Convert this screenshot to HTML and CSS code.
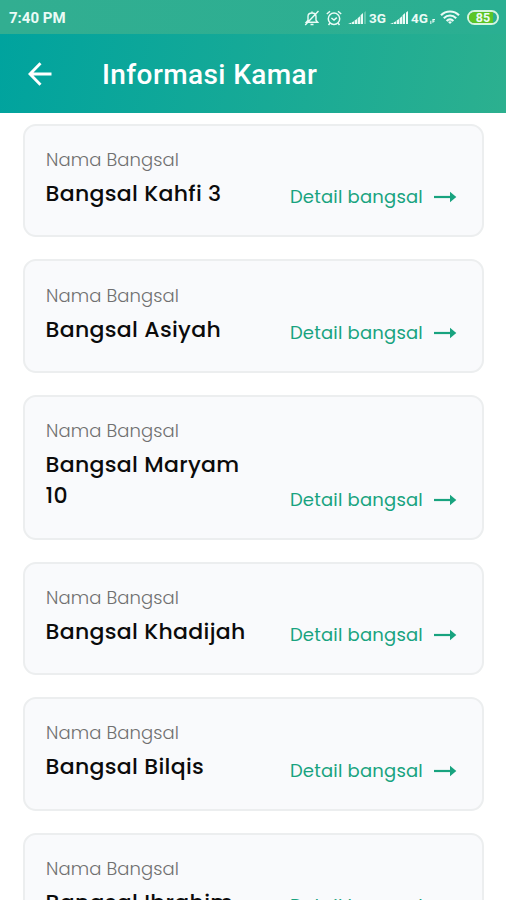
FILE: index.html
```html
<!DOCTYPE html>
<html lang="id">
<head>
<meta charset="utf-8">
<meta name="viewport" content="width=device-width, initial-scale=1">
<title>Informasi Kamar</title>
<link rel="stylesheet" href="styles.css">
</head>
<body>
<svg class="defs" aria-hidden="true">
  <symbol id="arrow" viewBox="0 0 24 12"><path d="M1 6H18" stroke="currentColor" stroke-width="2.2"/><path d="M17 .8L23.3 6L17 11.2Z" fill="currentColor"/></symbol>
  <symbol id="signal" viewBox="0 0 18 14"><path d="M0 13L3 11.7V13ZM3.6 11.4L6 10.3V13H3.6ZM6.6 9.6L9 8V13H6.6ZM9.6 7.3L12 5.2V13H9.6ZM12.6 4.3L15 2V13H12.6Z" fill="currentColor"/><path d="M16 1.5L18 0V13H16Z"/></symbol>
</svg>
<header class="status">
  <span class="time">7:40 PM</span>
  <div class="indicators">
    <svg class="bell" viewBox="0 0 16 16" fill="none" stroke="currentColor" stroke-width="1.4"><path d="M2.3 12.3H13.7L12 10.3V6.5C12 4.2 10.3 3 8 3S4 4.2 4 6.5V10.3ZM6.5 14.5H9.5M8 3V1.5M14.5 1L1.2 15"/></svg>
    <svg class="alarm" viewBox="0 0 16 16" fill="none" stroke="currentColor" stroke-width="1.5"><circle cx="8" cy="8.7" r="5.7"/><path d="M.8 4L4 1.2M15.2 4L12 1.2M5.4 8L8 10L10.8 7.6M4 13L2.5 15M12 13L13.5 15"/></svg>
    <svg class="signal weak"><use href="#signal"/></svg>
    <span class="net net-3g">3G</span>
    <svg class="signal"><use href="#signal"/></svg>
    <span class="net net-4g">4G</span>
    <svg class="data" viewBox="0 0 6 7"><path d="M1 6.5V2.5M3.5 5V1H6M3.5 3H5.5" fill="none" stroke="currentColor" stroke-width="1.3"/></svg>
    <svg class="wifi" viewBox="0 0 20 15" fill="none" stroke="currentColor" stroke-width="2.2"><path d="M1 5.3C6 .2 14 .2 19 5.3M3.8 8.2C7.5 4.6 12.5 4.6 16.2 8.2M6.6 11C8.7 9 11.3 9 13.4 11"/><path d="M8 12L10 14L12 12Q10 10.5 8 12Z" fill="currentColor" stroke="none"/></svg>
    <span class="battery"><span class="level">85</span></span>
  </div>
</header>
<nav class="appbar">
  <svg class="back" viewBox="0 0 24 24" fill="none" stroke="currentColor" stroke-width="2.9"><path d="M23.5 12H2.5M12.5 1.3L2 12L12.5 22.7"/></svg>
  <h1>Informasi Kamar</h1>
</nav>
<main>
  <article class="card"><p class="label">Nama Bangsal</p><div class="row"><h2>Bangsal Kahfi 3</h2><a class="detail"><span>Detail bangsal</span><svg class="arrow"><use href="#arrow"/></svg></a></div></article>
  <article class="card"><p class="label">Nama Bangsal</p><div class="row"><h2>Bangsal Asiyah</h2><a class="detail"><span>Detail bangsal</span><svg class="arrow"><use href="#arrow"/></svg></a></div></article>
  <article class="card"><p class="label">Nama Bangsal</p><div class="row"><h2>Bangsal Maryam 10</h2><a class="detail"><span>Detail bangsal</span><svg class="arrow"><use href="#arrow"/></svg></a></div></article>
  <article class="card"><p class="label">Nama Bangsal</p><div class="row"><h2>Bangsal Khadijah</h2><a class="detail"><span>Detail bangsal</span><svg class="arrow"><use href="#arrow"/></svg></a></div></article>
  <article class="card"><p class="label">Nama Bangsal</p><div class="row"><h2>Bangsal Bilqis</h2><a class="detail"><span>Detail bangsal</span><svg class="arrow"><use href="#arrow"/></svg></a></div></article>
  <article class="card"><p class="label">Nama Bangsal</p><div class="row"><h2>Bangsal Ibrahim</h2><a class="detail"><span>Detail bangsal</span><svg class="arrow"><use href="#arrow"/></svg></a></div></article>
</main>
</body>
</html>
```
FILE: styles.css
```css
* { box-sizing: border-box; }
body {
  margin: 0;
  height: 900px;
  overflow: hidden;
  display: flex;
  flex-direction: column;
  background: #fff;
  font-family: Poppins, Inter, sans-serif;
}
h1, h2, p { margin: 0; }
svg { display: block; flex: none; }
.defs { width: 0; height: 0; position: absolute; }
.status {
  flex: none;
  height: 34px;
  padding: 1px 7px 0 9px;
  display: flex;
  align-items: center;
  justify-content: space-between;
  background: linear-gradient(90deg, #32ae91, #2aaf92);
  color: #eafbf6;
  font-family: Roboto, sans-serif;
}
.time { font-size: 15px; font-weight: 700; }
.indicators { display: flex; align-items: center; }
.bell { width: 16px; height: 16px; margin-right: 6px; }
.alarm { width: 16px; height: 16px; margin-right: 6px; }
.signal { width: 18px; height: 14px; fill: currentColor; }
.signal.weak { fill: #65c6ad; }
.net { font-size: 13.5px; font-weight: 700; line-height: 16px; }
.net-3g { width: 18px; margin: 0 3px; }
.net-4g { width: 18px; margin-left: 3px; }
.data { width: 5px; height: 7px; margin: 7px 5px 0 1px; }
.wifi { width: 20px; height: 15px; margin-right: 7px; }
.battery {
  width: 32px;
  height: 15px;
  border: 2px solid #d5f5df;
  border-radius: 8px;
}
.level {
  display: block;
  height: 11px;
  border-radius: 6px;
  background: linear-gradient(90deg, #5cc526 84%, transparent 84%);
  font-size: 12.5px;
  font-weight: 700;
  line-height: 11px;
  text-align: center;
}
.appbar {
  flex: none;
  height: 79px;
  padding: 1px 28px 0;
  display: flex;
  align-items: center;
  gap: 50px;
  background: linear-gradient(100deg, #00a39e, #2cb08f);
  color: #fff;
}
.back { width: 24px; height: 24px; }
h1 { font: 500 28px/36px Roboto, sans-serif; letter-spacing: .4px; padding-top: 2px; }
main {
  padding: 11px 22px 0 23px;
  display: flex;
  flex-direction: column;
  gap: 22px;
}
.card {
  flex: none;
  padding: 20.1px 25px 26.1px 21px;
  border: 2px solid #eceeef;
  border-radius: 13px;
  background: #f9fafc;
}
.label {
  color: #707070;
  font-size: 18px;
  font-weight: 300;
  line-height: 28px;
  letter-spacing: .1px;
  padding-bottom: 4px;
}
.row {
  display: flex;
  justify-content: space-between;
  align-items: flex-end;
}
h2 {
  width: 210px;
  margin-left: -.5px;
  color: #0b0b0b;
  font-size: 22px;
  font-weight: 500;
  line-height: 31.3px;
  letter-spacing: .32px;
}
.detail {
  display: flex;
  align-items: center;
  gap: 10px;
  color: #18a37f;
  font-size: 18px;
  line-height: 28px;
  letter-spacing: .2px;
  white-space: nowrap;
  margin-bottom: -2.1px;
}
.arrow { width: 24px; height: 12px; }
```
